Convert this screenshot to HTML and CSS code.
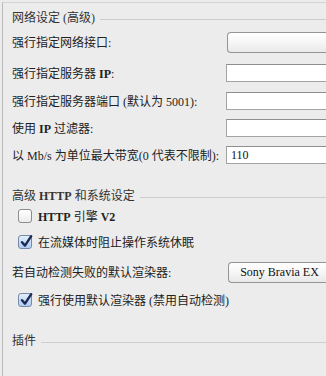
FILE: index.html
```html
<!DOCTYPE html>
<html lang="zh-CN">
<head>
<meta charset="utf-8">
<link rel="stylesheet" href="styles.css">
</head>
<body>
<div class="panel">
  <div class="section s1"><span class="stitle">网络设定 (高级)</span><span class="sline"></span></div>

  <div class="row r1"><span class="label">强行指定网络接口:</span><div class="combo"></div></div>
  <div class="row r2"><span class="label">强行指定服务器 <b>IP</b>:</span><div class="field"></div></div>
  <div class="row r3"><span class="label">强行指定服务器端口 (默认为 5001):</span><div class="field"></div></div>
  <div class="row r4"><span class="label">使用 <b>IP</b> 过滤器:</span><div class="field"></div></div>
  <div class="row r5"><span class="label">以 Mb/s 为单位最大带宽(0 代表不限制):</span><div class="field"><span class="val">110</span></div></div>

  <div class="section s2"><span class="stitle">高级 <b>HTTP</b> 和系统设定</span><span class="sline"></span></div>

  <div class="check c1"><span class="box"></span><span class="clabel"><b>HTTP</b> 引擎 <b>V2</b></span></div>
  <div class="check c2"><span class="box on"><svg viewBox="0 0 14 14" width="14" height="14"><path d="M3 7.2 L6 10.6 L12.2 1.2" fill="none" stroke="#1b2a55" stroke-width="2.4" stroke-linecap="round" stroke-linejoin="round"/></svg></span><span class="clabel">在流媒体时阻止操作系统休眠</span></div>

  <div class="row r6"><span class="label">若自动检测失败的默认渲染器:</span><div class="button">Sony Bravia EX</div></div>

  <div class="check c3"><span class="box on"><svg viewBox="0 0 14 14" width="14" height="14"><path d="M3 7.2 L6 10.6 L12.2 1.2" fill="none" stroke="#1b2a55" stroke-width="2.4" stroke-linecap="round" stroke-linejoin="round"/></svg></span><span class="clabel">强行使用默认渲染器 (禁用自动检测)</span></div>

  <div class="section s3"><span class="stitle">插件</span><span class="sline"></span></div>
</div>
</body>
</html>
```

FILE: styles.css
```css
html, body {
  margin: 0;
  padding: 0;
  background: #ececec;
  overflow: hidden;
  width: 326px;
  height: 376px;
}
body {
  font-family: "Liberation Serif", "Times New Roman", "Noto Sans CJK SC", serif;
  font-size: 12px;
  color: #222;
}
.panel {
  margin: 2px 0 0 2px;
  height: 374px;
  border-left: 1px solid #b9b9b9;
  border-top: 1px solid #d4d4d4;
  box-sizing: border-box;
  padding-top: 6px;
  overflow: hidden;
}
.section {
  display: flex;
  align-items: center;
  height: 16px;
  padding-left: 9px;
  color: #333;
}
.stitle { white-space: nowrap; }
.sline {
  flex: 1;
  height: 1px;
  background: #cdcdcd;
  margin-left: 5px;
  margin-top: 5px;
}
.row {
  display: flex;
  align-items: center;
  height: 28px;
  padding-left: 9px;
  white-space: nowrap;
}
.label { width: 214px; flex: none; }
.r1 { margin-top: 3px; }
.r2 { margin-top: 3px; }
.r4 { height: 26px; }
.r6 { height: 22px; margin-top: 9px; }
.field {
  flex: 1;
  height: 18px;
  box-sizing: border-box;
  border: 1px solid #a3a3a3;
  border-right: none;
  border-top-color: #8e8e8e;
  background: #fff;
  display: flex;
  align-items: center;
  padding-left: 4px;
}
.val { color: #111; }
.combo {
  margin-left: 1px;
  flex: 1;
  height: 21px;
  box-sizing: border-box;
  border: 1px solid #949494;
  border-right: none;
  border-radius: 4px 0 0 4px;
  background: linear-gradient(#ffffff, #f6f6f6 50%, #e9e9e9);
}
.button {
  margin-left: 2px;
  flex: 1;
  height: 21px;
  box-sizing: border-box;
  border: 1px solid #949494;
  border-right: none;
  border-radius: 4px 0 0 4px;
  background: linear-gradient(#ffffff, #f6f6f6 50%, #e8e8e8);
  display: flex;
  align-items: center;
  justify-content: center;
  padding-left: 4px;
  color: #111;
}
.s2 { margin-top: 18px; }
.check {
  display: flex;
  align-items: center;
  height: 20px;
  padding-left: 15px;
  white-space: nowrap;
}
.c1 { margin-top: 3px; }
.c2 { margin-top: 6px; }
.c3 { margin-top: 7px; }
.box {
  width: 14px;
  height: 14px;
  box-sizing: border-box;
  border: 1px solid #8c8c8c;
  border-radius: 3px;
  background: linear-gradient(#ffffff, #ececec);
  flex: none;
  position: relative;
  margin-right: 6px;
}
.box.on {
  background: linear-gradient(#e2eefb, #afcdef);
  border-color: #7489aa;
}
.box svg {
  position: absolute;
  left: 0;
  top: -1px;
}
.s3 { margin-top: 22px; }
b { font-weight: bold; }
```
